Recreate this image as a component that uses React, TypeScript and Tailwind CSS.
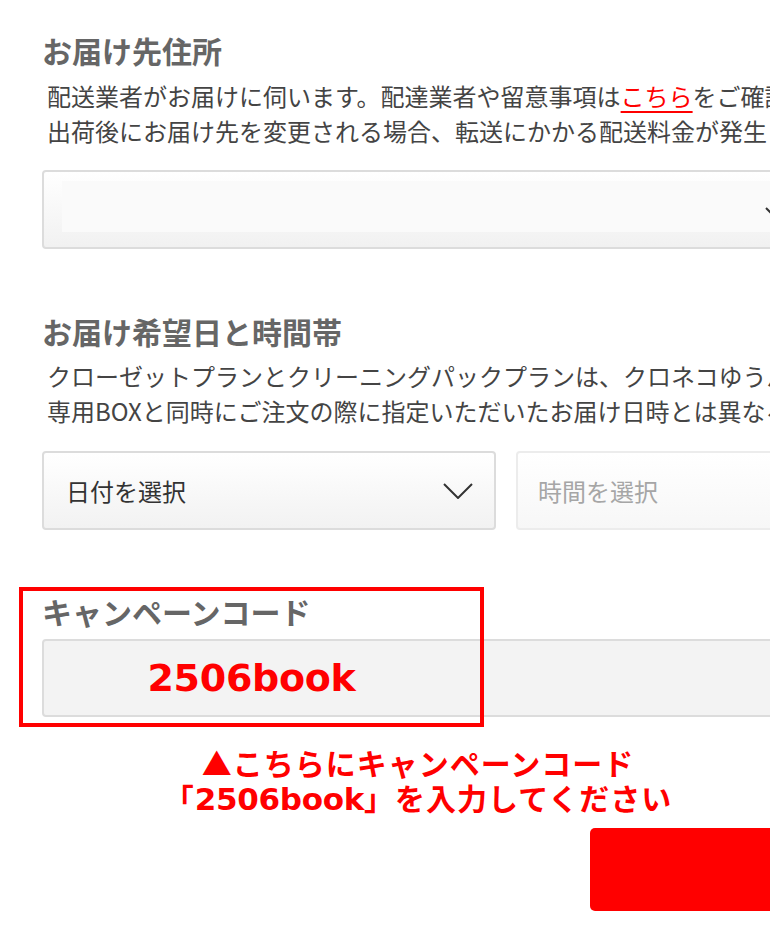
import React from "react";

function Chevron({ className }: { className?: string }) {
  return (
    <svg className={className} width="30" height="16" viewBox="0 0 30 16" fill="none">
      <polyline points="1,1 15,15 29,1" stroke="#333" strokeWidth="2" fill="none" />
    </svg>
  );
}

export default function App() {
  return (
    <div className="w-[770px] h-[946px] overflow-hidden bg-white font-['Noto_Sans_CJK_JP',sans-serif]">
      <div className="w-[820px] pl-[42px] pt-[35px]">
        {/* Section 1 */}
        <h2 className="text-[30px] leading-[30px] font-bold text-[#666] whitespace-nowrap">お届け先住所</h2>
        <p className="mt-[13px] pl-[5px] text-[24px] leading-[35px] text-[#444] whitespace-nowrap">
          配送業者がお届けに伺います。配達業者や留意事項は
          <span className="text-[#ff0000] underline decoration-2 underline-offset-[5px]">こちら</span>
          をご確認ください。
          <br />
          出荷後にお届け先を変更される場合、転送にかかる配送料金が発生します。
        </p>
        <div className="relative mt-[22px] h-[79px] w-[778px] rounded-[4px] border-2 border-[#dcdcdc] bg-gradient-to-b from-white to-[#f1f1f1]">
          <div className="ml-[18px] mt-[9px] h-[51px] w-[720px] bg-[#fafafa]" />
          <Chevron className="absolute left-[721px] top-[35px]" />
        </div>

        {/* Section 2 */}
        <h2 className="mt-[67px] text-[30px] leading-[30px] font-bold text-[#666] whitespace-nowrap">お届け希望日と時間帯</h2>
        <p className="mt-[12px] pl-[5px] text-[24px] leading-[35px] text-[#444] whitespace-nowrap">
          クローゼットプランとクリーニングパックプランは、クロネコゆうパケットでお届けします。
          <br />
          専用BOXと同時にご注文の際に指定いただいたお届け日時とは異なる場合がございます。
        </p>
        <div className="mt-[23px] flex gap-[20px]">
          <div className="flex h-[79px] w-[454px] shrink-0 items-center justify-between rounded-[4px] border-2 border-[#dcdcdc] bg-gradient-to-b from-white to-[#f2f2f2] pl-[22px] pr-[21px]">
            <span className="text-[24px] text-[#333]">日付を選択</span>
            <Chevron />
          </div>
          <div className="flex h-[79px] w-[454px] shrink-0 items-center rounded-[4px] border-2 border-[#ececec] bg-gradient-to-b from-white to-[#f7f7f7] pl-[20px]">
            <span className="text-[24px] text-[#a6a6a6]">時間を選択</span>
          </div>
        </div>

        {/* Section 3 */}
        <div className="relative mt-[66px]">
          <h2 className="text-[30px] leading-[30px] font-bold text-[#666] whitespace-nowrap">キャンペーンコード</h2>
          <div className="mt-[13px] h-[78px] w-[778px] rounded-[4px] border-2 border-[#dcdcdc] bg-[#f3f3f3]" />
          <div className="absolute left-[-23px] top-[-9px] flex h-[140px] w-[465px] items-center justify-center border-4 border-[#ff0000] pt-[41px]">
            <span className="font-['DejaVu_Sans',sans-serif] text-[38px] font-bold leading-none tracking-[-0.3px] text-[#ff0000]">
              2506book
            </span>
          </div>
        </div>

        <div className="mt-[28px] w-[752px] text-center text-[30px] font-bold leading-[35px] tracking-[1px] text-[#ff0000] whitespace-nowrap">
          <div>▲こちらにキャンペーンコード</div>
          <div>
            「
            <span className="font-['DejaVu_Sans',sans-serif] text-[31px] leading-none tracking-[-0.3px]">2506book</span>
            」を入力してください
          </div>
        </div>

        <div className="mt-[13px] flex justify-end">
          <div className="h-[83px] w-[230px] rounded-[5px] bg-[#ff0000]" />
        </div>
      </div>
    </div>
  );
}
